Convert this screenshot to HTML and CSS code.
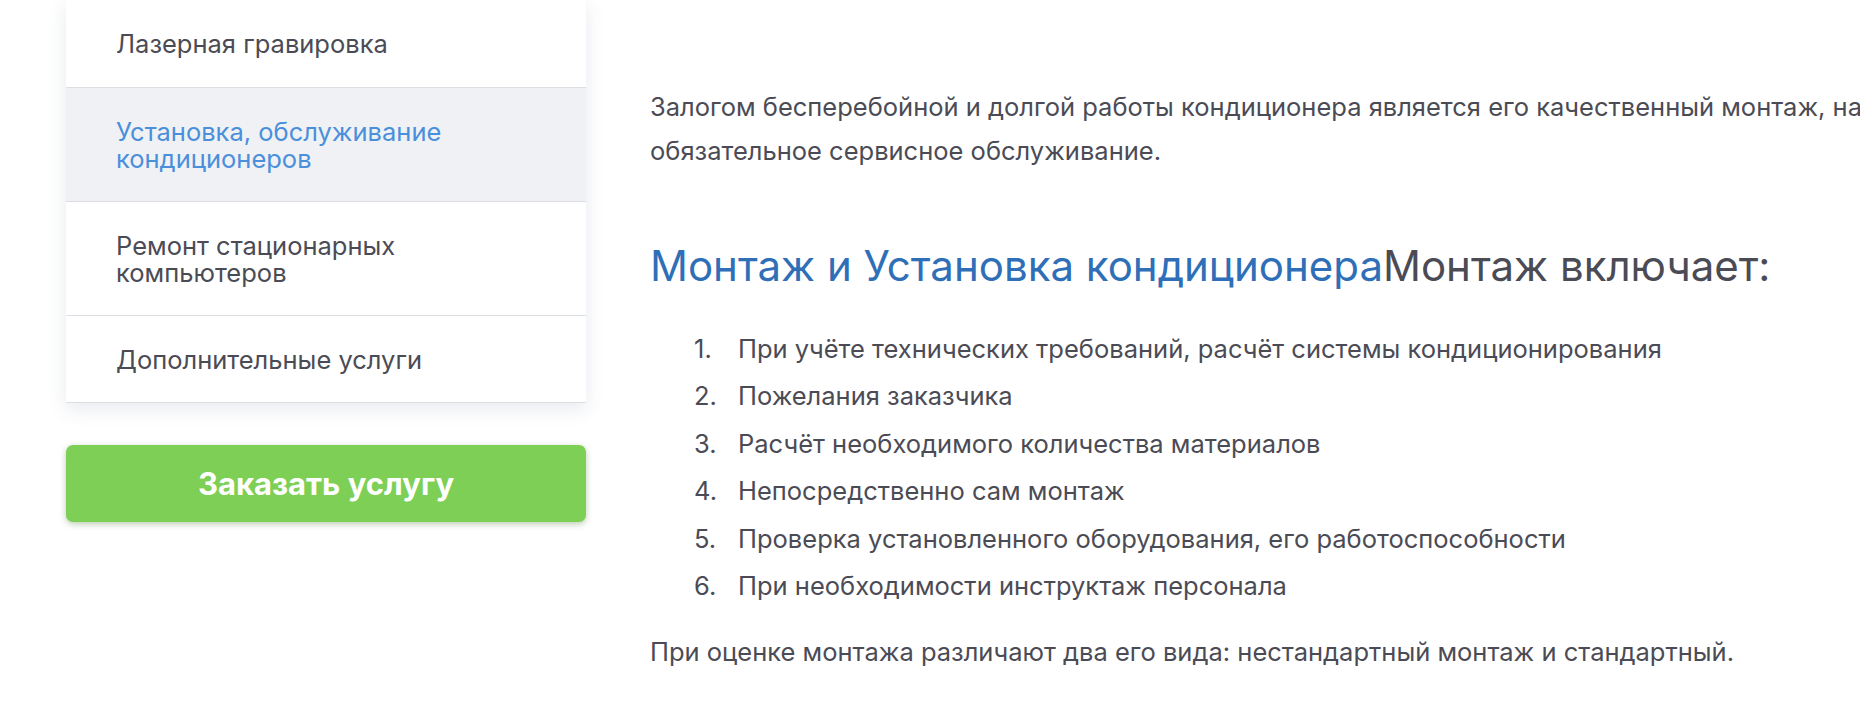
FILE: index.html
```html
<!DOCTYPE html>
<html lang="ru">

<head>
    <meta charset="UTF-8">
    <meta name="viewport" content="width=device-width, initial-scale=1.0">
    <title>Установка, обслуживание кондиционеров</title>
    <link rel="stylesheet" href="styles.css">
</head>

<body>
    <div class="page">
        <aside class="sidebar">
            <ul class="menu">
                <li><a href="#">Лазерная гравировка</a></li>
                <li class="active"><a href="#">Установка, обслуживание<br>кондиционеров</a></li>
                <li><a href="#">Ремонт стационарных<br>компьютеров</a></li>
                <li><a href="#">Дополнительные услуги</a></li>
            </ul>
            <a class="order-btn" href="#">Заказать услугу</a>
        </aside>

        <main class="content">
            <p class="lead">Залогом бесперебойной и долгой работы кондиционера является его качественный монтаж, надлежащая эксплуатация и обязательное сервисное обслуживание.</p>

            <h2 class="title">Монтаж и Установка кондиционера<span>Монтаж включает:</span></h2>

            <ol class="steps">
                <li>При учёте технических требований, расчёт системы кондиционирования</li>
                <li>Пожелания заказчика</li>
                <li>Расчёт необходимого количества материалов</li>
                <li>Непосредственно сам монтаж</li>
                <li>Проверка установленного оборудования, его работоспособности</li>
                <li>При необходимости инструктаж персонала</li>
            </ol>

            <p>При оценке монтажа различают два его вида: нестандартный монтаж и стандартный.</p>
        </main>
    </div>
</body>

</html>
```

FILE: styles.css
```css
html,
body {
    margin: 0;
    padding: 0;
    overflow: hidden;
    background: #fff;
}

body {
    font-family: Inter, "Noto Sans", "Liberation Sans", sans-serif;
    color: #4b4b55;
}

.page {
    display: flex;
    gap: 64px;
    padding-left: 66px;
}

.sidebar {
    flex: 0 0 520px;
    display: flex;
    flex-direction: column;
    gap: 42px;
}

.menu {
    list-style: none;
    margin: 0;
    padding: 0;
    background: #fff;
    box-shadow: 0 6px 18px rgba(60, 80, 120, 0.12);
}

.menu li {
    border-bottom: 1px solid #dcdee3;
}

.menu li:first-child a {
    padding-bottom: 30px;
}

.menu a {
    display: block;
    padding: 30px 30px 29px 50px;
    font-size: 25.5px;
    line-height: 27px;
    color: #4b4b55;
    text-decoration: none;
}

.menu li.active {
    background: #f0f1f4;
}

.menu li.active a {
    color: #4a8fdb;
}

.order-btn {
    display: block;
    height: 77px;
    line-height: 77px;
    text-align: center;
    background: #7ecf55;
    border-radius: 7px;
    box-shadow: 0 2px 6px rgba(60, 110, 30, 0.35);
    color: #fff;
    font-size: 31px;
    font-weight: 700;
    text-decoration: none;
}

.content {
    flex: 0 0 1640px;
    padding-top: 85px;
    font-size: 25.5px;
}

.content p {
    margin: 0;
    line-height: 44px;
}

.title {
    margin: 68px 0 34px;
    font-size: 42px;
    font-weight: 400;
    line-height: 50px;
    color: #2f6fb8;
}

.title span {
    color: #4b4b55;
}

.steps {
    list-style: none;
    margin: 0 0 21px;
    padding: 0 0 0 88px;
    counter-reset: step;
}

.steps li {
    counter-increment: step;
    line-height: 47.4px;
}

.steps li::before {
    content: counter(step) ".";
    display: inline-block;
    width: 44px;
    margin-left: -44px;
}
```
